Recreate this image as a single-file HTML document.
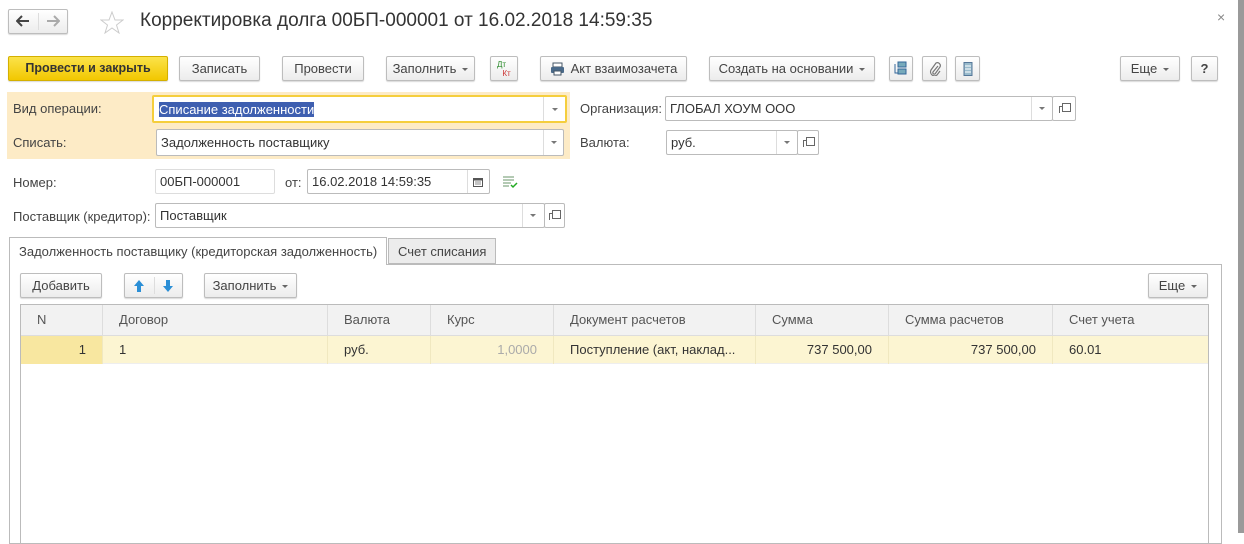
<!DOCTYPE html>
<html><head><meta charset="utf-8"><style>
*{box-sizing:border-box;margin:0;padding:0}
body{width:1244px;height:533px;overflow:hidden;background:#fff;font-family:"Liberation Sans",Arial,sans-serif;font-size:13px;color:#444;position:relative}
.a{position:absolute}
.btn{position:absolute;height:25px;border:1px solid #bdbdbd;border-radius:2px;background:linear-gradient(#fff,#ececec);box-shadow:0 1px 1px rgba(0,0,0,.15);text-align:center;line-height:23px;color:#444;white-space:nowrap}
.dd::after{content:"";display:inline-block;margin-left:6px;vertical-align:middle;border:3px solid transparent;border-top:3px solid #666;border-bottom:0}
.fld{position:absolute;height:25px;border:1px solid #bbb;border-radius:2px;background:#fff;line-height:24px;padding-left:4px;color:#333;white-space:nowrap}
.sep{position:absolute;top:0;bottom:0;border-left:1px solid #ddd}
.arr{position:absolute;width:0;height:0;border:3px solid transparent;border-top:3px solid #777;border-bottom:0}
.ob{position:absolute;width:12px;height:12px}
.ob::before{content:"";position:absolute;left:0;top:3px;width:6px;height:6px;border-left:1px solid #666;border-top:1px solid #666}
.ob::after{content:"";position:absolute;left:3px;top:0;width:7px;height:7px;border:1px solid #666;background:#fff}
.lbl{position:absolute;color:#444}
.th{position:absolute;top:0;height:31px;line-height:30px;border-right:1px solid #ddd;padding-left:16px;color:#555}
.td{position:absolute;top:31px;height:28px;line-height:28px;border-right:1px solid #f0e8c0;color:#333}
</style></head><body>
<div class="btn" style="left:8px;top:9px;width:60px;height:25px"></div>
<div class="a" style="left:38px;top:13px;height:17px;border-left:1px solid #ddd"></div>
<svg class="a" style="left:16px;top:15px" width="14" height="12"><path d="M13 6H2M6 1L1 6l5 5" fill="none" stroke="#444" stroke-width="2"/></svg>
<svg class="a" style="left:46px;top:15px" width="14" height="12"><path d="M1 6h11M8 1l5 5-5 5" fill="none" stroke="#aaa" stroke-width="2"/></svg>
<svg class="a" style="left:100px;top:11px" width="24" height="23"><polygon points="12,1 15,9 23,9 16.5,14 19,22 12,17 5,22 7.5,14 1,9 9,9" fill="none" stroke="#ccc"/></svg>
<div class="a" style="left:140px;top:10px;font-size:19px;color:#333">Корректировка долга 00БП-000001 от 16.02.2018 14:59:35</div>
<div class="a" style="left:1217px;top:9px;font-size:14px;color:#888">×</div>
<div class="a" style="left:1238px;top:0;width:6px;height:533px;background:#9a9a9a"></div>
<div class="btn" style="left:8px;top:56px;width:160px;background:linear-gradient(#fbe34a,#f2c700);border-color:#d4b000;color:#333;font-weight:bold;font-size:12.5px">Провести и закрыть</div>
<div class="btn" style="left:179px;top:56px;width:81px">Записать</div>
<div class="btn" style="left:282px;top:56px;width:82px">Провести</div>
<div class="btn dd" style="left:386px;top:56px;width:89px">Заполнить</div>
<div class="btn" style="left:490px;top:56px;width:28px;font-size:8px;line-height:9px;padding-top:3px"><span style="color:#2a8a2a;margin-right:5px">Дт</span><br><span style="color:#c33;margin-left:5px">Кт</span></div>
<div class="btn" style="left:540px;top:56px;width:147px"><svg style="vertical-align:-3px;margin-right:6px" width="15" height="14"><rect x="3" y="1" width="9" height="4" fill="#fff" stroke="#456"/><rect x="1" y="5" width="13" height="6" rx="1" fill="#4a6a8a"/><rect x="4" y="9" width="7" height="4" fill="#fff" stroke="#456"/></svg>Акт взаимозачета</div>
<div class="btn dd" style="left:709px;top:56px;width:166px">Создать на основании</div>
<div class="btn" style="left:889px;top:56px;width:24px"><svg style="margin-top:4px" width="14" height="15"><rect x="4" y="1" width="8" height="5" fill="#7ab" stroke="#369"/><rect x="4" y="8" width="8" height="5" fill="#7ab" stroke="#369"/><path d="M1 3v9h3" fill="none" stroke="#369"/></svg></div>
<div class="btn" style="left:922px;top:56px;width:25px"><svg style="margin-top:5px" width="12" height="14"><path d="M9 4L4 10a1.5 1.5 0 0 0 2 2l5-7a3 3 0 0 0-4-4L2 8a4 4 0 0 0 6 5l3-4" fill="none" stroke="#777" stroke-width="1.2"/></svg></div>
<div class="btn" style="left:955px;top:56px;width:25px"><svg style="margin-top:5px" width="10" height="14"><rect x="1" y="0.5" width="8" height="13" fill="#9bc" stroke="#579"/><path d="M2 4h6M2 7h6M2 10h6" stroke="#fff"/></svg></div>
<div class="btn dd" style="left:1120px;top:56px;width:60px">Еще</div>
<div class="btn" style="left:1191px;top:56px;width:27px;font-weight:bold">?</div>
<div class="a" style="left:7px;top:92px;width:563px;height:67px;background:#fdebc6"></div>
<div class="lbl" style="left:13px;top:101px">Вид операции:</div>
<div class="fld" style="left:152px;top:95px;width:415px;height:28px;border:2px solid #f5ce3c;line-height:25px;padding-left:5px"><span style="background:#3e5fb0;color:#fff">Списание задолженности</span><div class="sep" style="left:389px"></div><div class="arr" style="left:398px;top:11px"></div></div>
<div class="lbl" style="left:13px;top:135px">Списать:</div>
<div class="fld" style="left:156px;top:129px;width:408px;height:27px;line-height:26px">Задолженность поставщику<div class="sep" style="left:386px"></div><div class="arr" style="left:394px;top:11px"></div></div>
<div class="lbl" style="left:580px;top:101px">Организация:</div>
<div class="fld" style="left:665px;top:96px;width:388px;height:25px">ГЛОБАЛ ХОУМ ООО<div class="sep" style="left:365px"></div><div class="arr" style="left:373px;top:10px"></div><div class="sep" style="left:386px"></div></div>
<div class="fld" style="left:1052px;top:96px;width:24px;height:25px"><div class="ob" style="left:6px;top:6px"></div></div>
<div class="lbl" style="left:580px;top:135px">Валюта:</div>
<div class="fld" style="left:666px;top:130px;width:132px;height:25px">руб.<div class="sep" style="left:109px"></div><div class="arr" style="left:117px;top:10px"></div></div>
<div class="fld" style="left:797px;top:130px;width:22px;height:25px"><div class="ob" style="left:5px;top:6px"></div></div>
<div class="lbl" style="left:13px;top:175px">Номер:</div>
<div class="fld" style="left:155px;top:169px;width:120px;border-color:#ddd">00БП-000001</div>
<div class="lbl" style="left:285px;top:175px">от:</div>
<div class="fld" style="left:307px;top:169px;width:183px">16.02.2018 14:59:35<div class="sep" style="left:159px"></div><svg class="a" style="left:165px;top:7px" width="10" height="10"><rect x="0.5" y="1.5" width="9" height="8" fill="none" stroke="#555"/><rect x="0.5" y="1.5" width="9" height="2" fill="#555"/><path d="M2 5h6M2 7h6" stroke="#888"/></svg></div>
<svg class="a" style="left:502px;top:175px" width="16" height="14"><path d="M1 2h11M1 5h11M1 8h8M1 11h6" stroke="#8a8" stroke-width="1.3"/><path d="M9 10l2 2 4-4" fill="none" stroke="#2a2" stroke-width="1.5"/></svg>
<div class="lbl" style="left:13px;top:209px">Поставщик (кредитор):</div>
<div class="fld" style="left:155px;top:203px;width:390px">Поставщик<div class="sep" style="left:366px"></div><div class="arr" style="left:374px;top:10px"></div></div>
<div class="fld" style="left:544px;top:203px;width:21px"><div class="ob" style="left:4px;top:6px"></div></div>
<div class="a" style="left:9px;top:264px;width:1213px;height:280px;border:1px solid #bbb"></div>
<div class="a" style="left:9px;top:237px;width:378px;height:28px;border:1px solid #bbb;border-bottom:none;background:#fff;padding:6px 0 0 9px;color:#444;white-space:nowrap">Задолженность поставщику (кредиторская задолженность)</div>
<div class="a" style="left:388px;top:238px;width:108px;height:26px;border:1px solid #bbb;background:#ececec;padding:5px 0 0 9px;color:#444">Счет списания</div>
<div class="btn" style="left:20px;top:273px;width:82px">Добавить</div>
<div class="btn" style="left:124px;top:273px;width:59px"><div class="a" style="left:29px;top:3px;height:17px;border-left:1px solid #ddd"></div>
<svg class="a" style="left:8px;top:5px" width="12" height="14"><path d="M6 1L1 7h3v6h4V7h3z" fill="#2b8fd6"/></svg>
<svg class="a" style="left:37px;top:5px" width="12" height="14"><path d="M6 13L1 7h3V1h4v6h3z" fill="#2b8fd6"/></svg></div>
<div class="btn dd" style="left:204px;top:273px;width:93px">Заполнить</div>
<div class="btn dd" style="left:1148px;top:273px;width:60px">Еще</div>
<div class="a" style="left:20px;top:304px;width:1189px;height:240px;border:1px solid #bbb;overflow:hidden">
<div class="a" style="left:0;top:0;width:1189px;height:31px;background:#f2f2f2;border-bottom:1px solid #ddd"></div>
<div class="th" style="left:0;width:82px">N</div>
<div class="th" style="left:82px;width:225px">Договор</div>
<div class="th" style="left:307px;width:103px">Валюта</div>
<div class="th" style="left:410px;width:123px">Курс</div>
<div class="th" style="left:533px;width:202px">Документ расчетов</div>
<div class="th" style="left:735px;width:133px">Сумма</div>
<div class="th" style="left:868px;width:164px">Сумма расчетов</div>
<div class="th" style="left:1032px;width:157px;border:none">Счет учета</div>
<div class="a" style="left:0;top:31px;width:1189px;height:28px;background:#fcf5d2;border-bottom:1px solid #eee"></div>
<div class="td" style="left:0;width:82px;background:#f8e7a0;text-align:right;padding-right:16px">1</div>
<div class="td" style="left:82px;width:225px;padding-left:16px">1</div>
<div class="td" style="left:307px;width:103px;padding-left:16px">руб.</div>
<div class="td" style="left:410px;width:123px;text-align:right;padding-right:16px;color:#aaa">1,0000</div>
<div class="td" style="left:533px;width:202px;padding-left:16px;white-space:nowrap">Поступление (акт, наклад...</div>
<div class="td" style="left:735px;width:133px;text-align:right;padding-right:16px">737 500,00</div>
<div class="td" style="left:868px;width:164px;text-align:right;padding-right:16px">737 500,00</div>
<div class="td" style="left:1032px;width:157px;padding-left:16px;border:none">60.01</div>
</div>
</body></html>
